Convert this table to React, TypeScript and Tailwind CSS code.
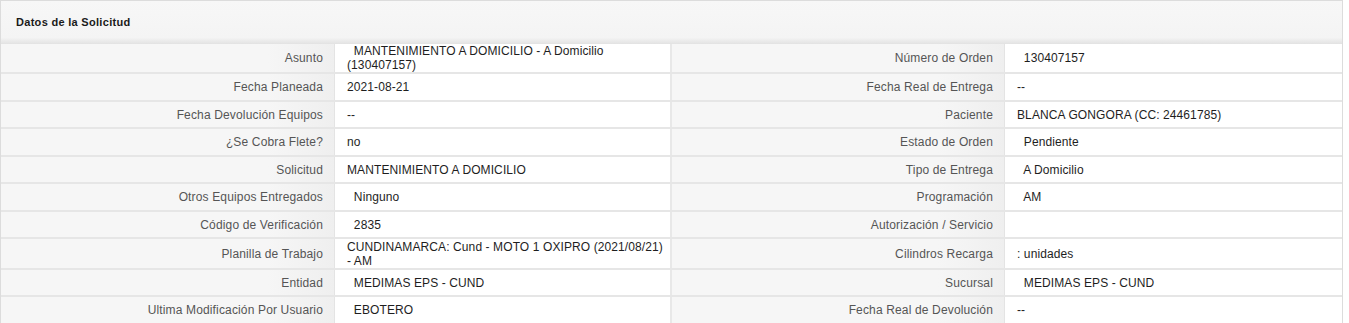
import React from "react";

type Row = { h: number; l1: string; v1: string; l2: string; v2: string };

const rows: Row[] = [
  { h: 30, l1: "Asunto", v1: "\u00a0 MANTENIMIENTO A DOMICILIO - A Domicilio (130407157)", l2: "Número de Orden", v2: "\u00a0 130407157" },
  { h: 28, l1: "Fecha Planeada", v1: "2021-08-21", l2: "Fecha Real de Entrega", v2: "--" },
  { h: 27, l1: "Fecha Devolución Equipos", v1: "--", l2: "Paciente", v2: "BLANCA GONGORA (CC: 24461785)" },
  { h: 28, l1: "¿Se Cobra Flete?", v1: "no", l2: "Estado de Orden", v2: "\u00a0 Pendiente" },
  { h: 27, l1: "Solicitud", v1: "MANTENIMIENTO A DOMICILIO", l2: "Tipo de Entrega", v2: "\u00a0 A Domicilio" },
  { h: 28, l1: "Otros Equipos Entregados", v1: "\u00a0 Ninguno", l2: "Programación", v2: "\u00a0 AM" },
  { h: 27, l1: "Código de Verificación", v1: "\u00a0 2835", l2: "Autorización / Servicio", v2: "" },
  { h: 31, l1: "Planilla de Trabajo", v1: "CUNDINAMARCA: Cund - MOTO 1 OXIPRO (2021/08/21) - AM", l2: "Cilindros Recarga", v2: ": unidades" },
  { h: 27, l1: "Entidad", v1: "\u00a0 MEDIMAS EPS - CUND", l2: "Sucursal", v2: "\u00a0 MEDIMAS EPS - CUND" },
  { h: 28, l1: "Ultima Modificación Por Usuario", v1: "\u00a0 EBOTERO", l2: "Fecha Real de Devolución", v2: "--" },
];

function Label({ text }: { text: string }) {
  return (
    <div className="flex items-center justify-end border-r border-[#e4e4e4] bg-[linear-gradient(to_right,#f6f6f6_80%,#efefef)] pr-[11px] tracking-[0.15px] text-[#555]">
      {text}
    </div>
  );
}

function Value({ text, divider }: { text: string; divider?: boolean }) {
  return (
    <div
      className={
        "flex items-center bg-white pl-3 pr-1 leading-[14px] tracking-[0.1px] text-[#1e1e1e] " +
        (divider ? "border-r-2 border-[#e8e8e8]" : "")
      }
    >
      <span>{text}</span>
    </div>
  );
}

export default function App() {
  return (
    <div className="w-[1343px] bg-white font-['Liberation_Sans',Arial,sans-serif] text-[12px]">
      <div className="flex h-[44px] items-center border border-b-0 border-[#dcdcdc] bg-[linear-gradient(to_bottom,#f7f7f7_0%,#f4f4f4_85%,#e2e2e2_100%)] pl-[15px]">
        <span className="text-[11px] font-bold tracking-[0.3px] text-[#1a1a1a]">Datos de la Solicitud</span>
      </div>
      <div className="border-x border-[#dcdcdc]">
        {rows.map((r) => (
          <div
            key={r.l1}
            className="grid grid-cols-[334px_337px_333px_1fr] border-b-2 border-[#e6e6e6]"
            style={{ height: r.h }}
          >
            <Label text={r.l1} />
            <Value text={r.v1} divider />
            <Label text={r.l2} />
            <Value text={r.v2} />
          </div>
        ))}
      </div>
    </div>
  );
}
